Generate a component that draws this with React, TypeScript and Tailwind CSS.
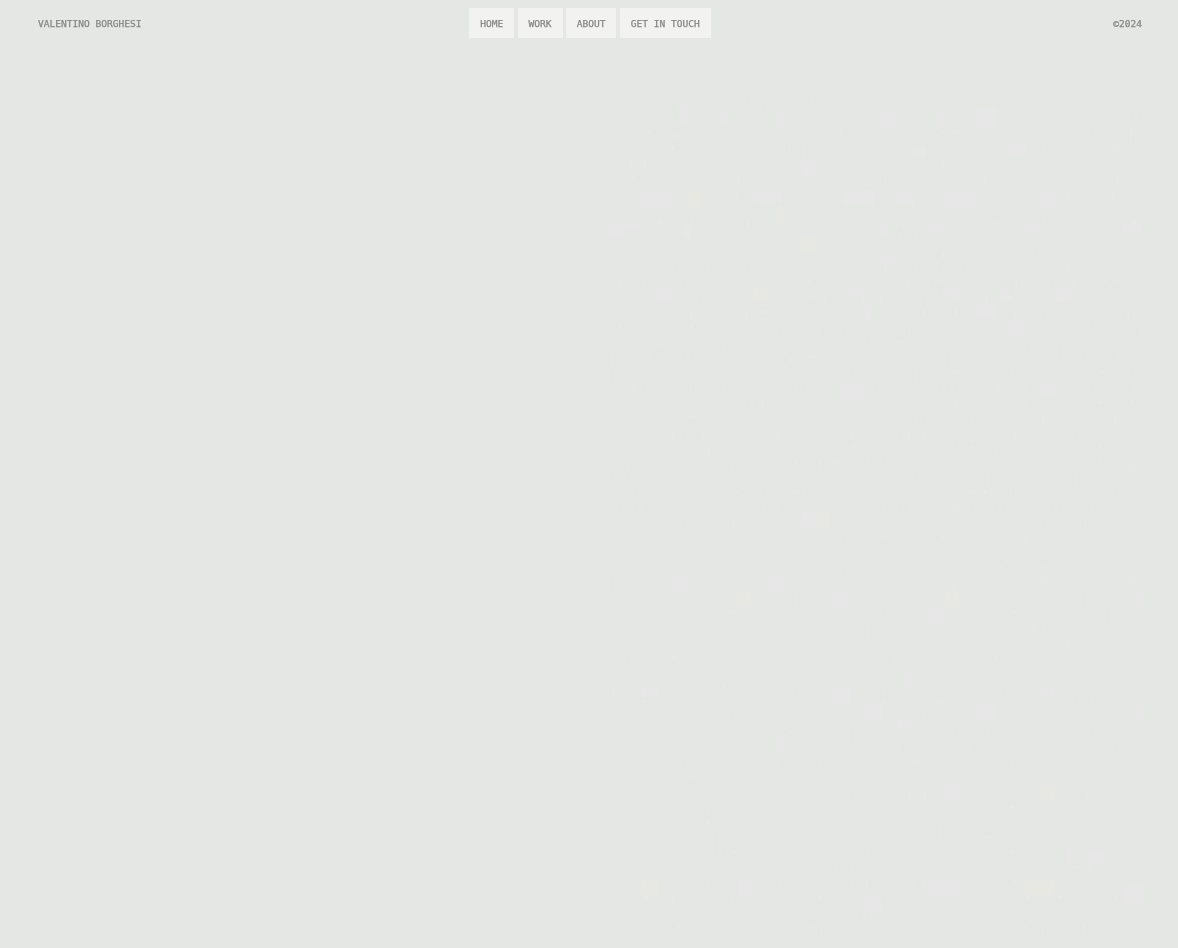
const links = ["HOME", "WORK", "ABOUT", "GET IN TOUCH"];

// brighter blocks of the noise texture: x1, x2, y1, y2, warm tint
const blocks: [number, number, number, number, boolean?][] = [
  [679, 688, 103, 123], [720, 729, 112, 125], [775, 784, 112, 127], [880, 897, 112, 127],
  [935, 943, 112, 127], [976, 996, 107, 127], [913, 926, 147, 158], [1009, 1026, 143, 155],
  [801, 817, 160, 175], [641, 672, 192, 207], [688, 701, 192, 207, true], [753, 782, 192, 202],
  [843, 875, 192, 205], [897, 913, 192, 205], [943, 976, 192, 207], [1040, 1057, 192, 207],
  [775, 784, 208, 223, true], [607, 624, 223, 238], [624, 639, 223, 230], [683, 690, 223, 238],
  [880, 888, 223, 238], [928, 945, 223, 232], [1024, 1039, 223, 232], [1122, 1142, 223, 232],
  [801, 816, 238, 253, true], [880, 897, 255, 263], [655, 672, 287, 302], [753, 768, 288, 302, true],
  [849, 864, 287, 297], [943, 959, 287, 297], [1000, 1009, 288, 303], [1057, 1072, 287, 302],
  [864, 871, 303, 320], [976, 996, 303, 318], [1009, 1024, 320, 335], [840, 864, 383, 400],
  [1040, 1055, 385, 398], [801, 816, 512, 528], [816, 830, 512, 528, true], [672, 688, 575, 592],
  [768, 784, 575, 592], [736, 751, 592, 607, true], [832, 849, 592, 607], [945, 959, 592, 607, true],
  [928, 943, 608, 623], [1136, 1144, 592, 607], [641, 659, 688, 697], [832, 851, 688, 703],
  [1040, 1055, 688, 695], [904, 913, 673, 687], [865, 882, 703, 720], [897, 913, 720, 728],
  [976, 996, 705, 720], [1136, 1144, 705, 720], [777, 784, 735, 752], [943, 959, 785, 800],
  [1040, 1055, 785, 800, true], [1066, 1072, 848, 863], [1088, 1105, 850, 863],
  [641, 659, 880, 897, true], [738, 753, 880, 895], [928, 959, 880, 895], [1024, 1055, 880, 895, true],
  [1123, 1144, 885, 903], [865, 882, 897, 913],
];

// small ticks between the blocks, seeded so it's the same each run
function makeTicks() {
  const ticks: { x: number; y: number; w: number; h: number }[] = [];
  let seed = 11;
  const rnd = () => {
    seed = (seed * 16807) % 2147483647;
    return seed / 2147483647;
  };
  for (let row = 0; row < 56; row++) {
    const y = 100 + row * 15;
    // the middle band of the page is the busiest
    const density = y > 250 && y < 520 ? 0.42 : 0.2;
    for (let col = 0; col < 36; col++) {
      const hit = rnd();
      const tall = rnd();
      const jitter = rnd();
      if (hit < density) {
        ticks.push({
          x: 612 + col * 14.7 + jitter * 8,
          y,
          w: tall < 0.5 ? 2 : 4,
          h: tall < 0.5 ? 10 : 4,
        });
      }
    }
  }
  return ticks;
}

const ticks = makeTicks();

export default function App() {
  return (
    <main className="relative h-[948px] w-full overflow-hidden bg-[#e5e7e4] font-['DejaVu_Sans_Mono',monospace]">
      <svg className="absolute inset-0 blur-[1px]" width="1178" height="948" aria-hidden="true">
        {ticks.map((t, i) => (
          <rect key={i} x={t.x} y={t.y} width={t.w} height={t.h} fill="#e7e8e6" />
        ))}
        {blocks.map(([x1, x2, y1, y2, warm], i) => (
          <rect key={i} x={x1} y={y1} width={x2 - x1} height={y2 - y1} fill={warm ? "#e8e8e3" : "#e7e7e7"} />
        ))}
      </svg>
      <header className="relative grid grid-cols-[1fr_auto_1fr] items-start pl-[38px] pr-[36px] pt-2 text-[9.56px] leading-[32px] text-[#868686] [-webkit-text-stroke:0.25px_#868686] blur-[0.3px]">
        <div>VALENTINO BORGHESI</div>
        <nav className="flex gap-[3.2px]">
          {links.map((label) => (
            <a key={label} className="h-[30px] bg-[#f2f2f1] px-[11px]">
              {label}
            </a>
          ))}
        </nav>
        <div className="text-right">©2024</div>
      </header>
    </main>
  );
}
